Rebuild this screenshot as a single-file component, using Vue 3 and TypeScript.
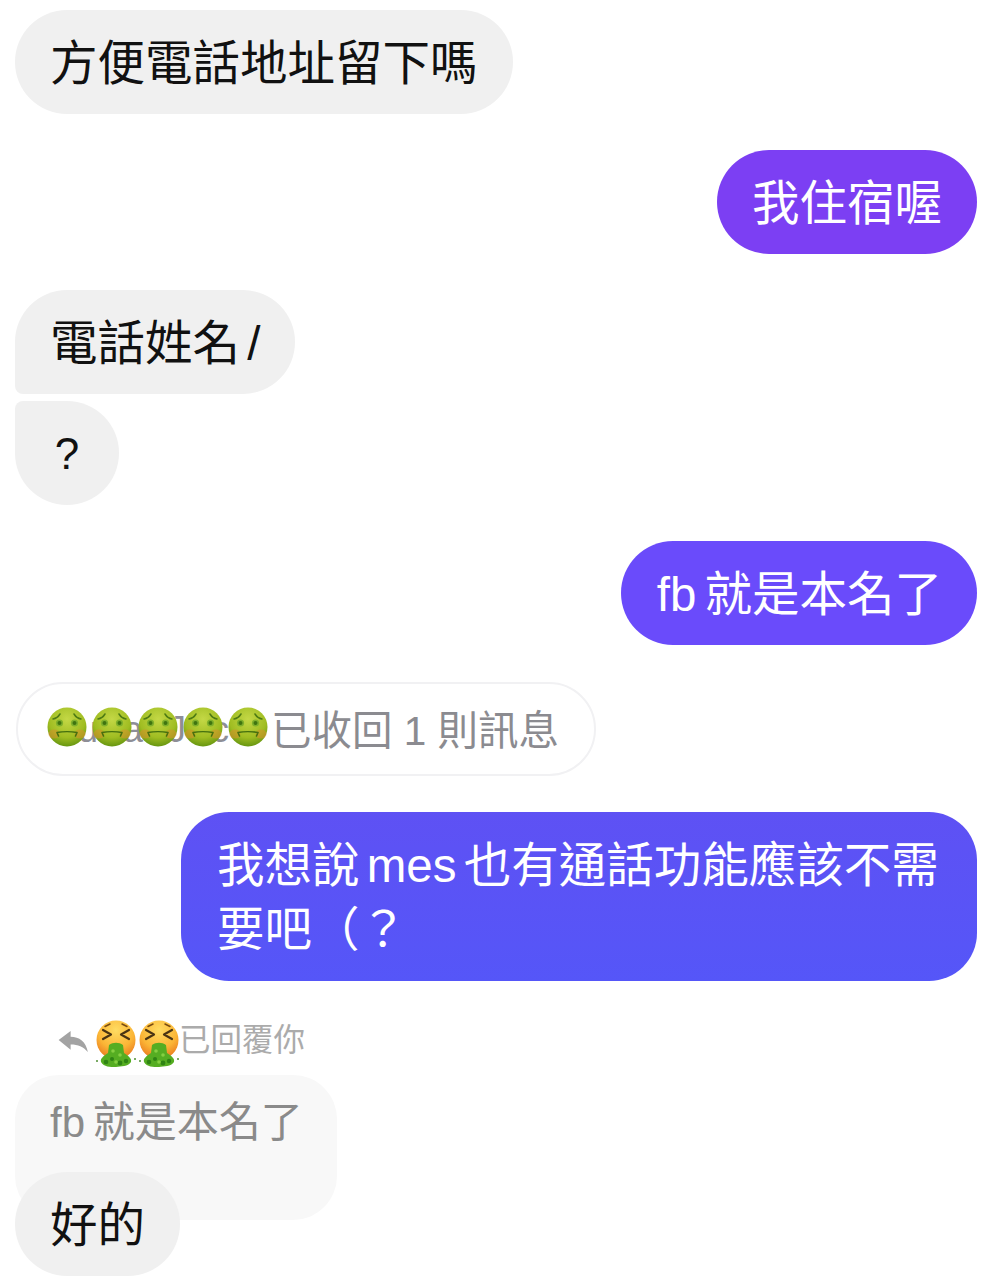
<script setup lang="ts">
const sick: number[] = [0, 1, 2, 3, 4]
const vomit: number[] = [0, 1]
</script>

<template>
  <main class="chat">
    <div class="row group"><div class="bubble in">方便電話地址留下嗎</div></div>
    <div class="row end group"><div class="bubble out violet">我住宿喔</div></div>

    <div class="row tight"><div class="bubble in first">電話姓名 /</div></div>
    <div class="row group"><div class="bubble in last">?</div></div>

    <div class="row end group-wide"><div class="bubble out indigo">fb 就是本名了</div></div>

    <div class="row group">
      <div class="notice">
        <span class="censored">
          <span class="hidden-name">uaJc</span>
          <span class="sick-row">
            <svg v-for="i in sick" :key="i" class="emoji" viewBox="0 0 40 40" aria-hidden="true">
              <defs>
                <radialGradient :id="'face' + i" cx="50%" cy="30%" r="72%">
                  <stop offset="0" stop-color="#c4d846" />
                  <stop offset="0.65" stop-color="#a0bd22" />
                  <stop offset="1" stop-color="#62930f" />
                </radialGradient>
              </defs>
              <circle cx="20" cy="20" r="19.5" :fill="'url(#face' + i + ')'" />
              <ellipse cx="7" cy="27" rx="5.500" ry="4.500" fill="#d2922a" opacity="0.6" />
              <ellipse cx="33" cy="27" rx="5.500" ry="4.500" fill="#d2922a" opacity="0.6" />
              <path d="M6 12 C9 11.500 11.500 9.500 13 7 M34 12 C31 11.500 28.500 9.500 27 7" fill="none" stroke="#4d7a14" stroke-width="1.500" stroke-linecap="round" />
              <circle cx="12.500" cy="16" r="3.600" fill="#7fb02c" />
              <circle cx="27.500" cy="16" r="3.600" fill="#7fb02c" />
              <circle cx="12.500" cy="16" r="2" fill="#3f7410" />
              <circle cx="27.500" cy="16" r="2" fill="#3f7410" />
              <path d="M10 25.500 C15 24.500 25 24.500 30 25.500 M10 25.500 L11.500 29 M30 25.500 L28.500 29" fill="none" stroke="#45700f" stroke-width="1.600" stroke-linecap="round" />
            </svg>
          </span>
        </span>
        <span class="notice-text">已收回 1 則訊息</span>
      </div>
    </div>

    <div class="row end group">
      <div class="bubble out blue">我想說 mes 也有通話功能應該不需要吧（？</div>
    </div>

    <div class="reply-label">
      <svg class="reply-arrow" viewBox="0 0 32 24" aria-hidden="true">
        <path d="M0.500 10.500 L13 1 L13 7 C22 7 29 12 31 23 C26 17 21 15 13 15 L13 20.500 Z" fill="#a3a3a3" />
      </svg>
      <svg v-for="i in vomit" :key="i" class="emoji-v" viewBox="0 0 42 48" aria-hidden="true">
        <defs>
          <radialGradient :id="'orange' + i" cx="50%" cy="25%" r="75%">
            <stop offset="0" stop-color="#ffdc62" />
            <stop offset="0.62" stop-color="#fbb536" />
            <stop offset="1" stop-color="#ea7a1e" />
          </radialGradient>
        </defs>
        <circle cx="21" cy="20" r="19.500" :fill="'url(#orange' + i + ')'" />
        <path d="M8 10 L16 14.500 L8 19 M34 10 L26 14.500 L34 19" fill="none" stroke="#4a3413" stroke-width="2.200" stroke-linecap="round" stroke-linejoin="round" />
        <path d="M10 6.500 L15 4 M32 6.500 L27 4" fill="none" stroke="#7a4d13" stroke-width="1.500" stroke-linecap="round" />
        <path d="M14 25 C18 22 24 22 28 25 L29 33 C33 36 37 38 36 42 C33 47 26 46 21 47 C15 47 9 47 6 42 C5 38 9 36 13 33 Z" fill="#55ad22" />
        <circle cx="11" cy="42" r="2.300" fill="#2f8414" />
        <circle cx="17" cy="39" r="2" fill="#2f8414" />
        <circle cx="25" cy="43" r="2.400" fill="#2f8414" />
        <circle cx="31" cy="41" r="2.200" fill="#2f8414" />
        <circle cx="18" cy="31" r="1.800" fill="#85cf42" />
        <circle cx="25" cy="35" r="1.800" fill="#85cf42" />
        <circle cx="21" cy="42" r="1.800" fill="#85cf42" />
        <circle cx="2" cy="41" r="1" fill="#4f8f33" />
        <circle cx="40" cy="39" r="1" fill="#4f8f33" />
      </svg>
      <span class="reply-text">已回覆你</span>
    </div>

    <div class="quote">fb 就是本名了</div>
    <div class="row overlap"><div class="bubble in">好的</div></div>
  </main>
</template>

<style>
html, body { margin: 0; background: #fff; }
</style>

<style scoped>
.chat {
  width: 986px;
  height: 1280px;
  box-sizing: border-box;
  padding: 10px 9px 0 15px;
  display: flex;
  flex-direction: column;
  overflow: hidden;
  font-family: "Liberation Sans", "Noto Sans CJK TC", sans-serif;
}
.row { display: flex; }
.end { justify-content: flex-end; }
.group { margin-bottom: 36px; }
.group-wide { margin-bottom: 37px; }
.tight { margin-bottom: 7px; }
.bubble {
  box-sizing: border-box;
  padding: 22px 35px 18px;
  font-size: 47.5px;
  line-height: 64px;
  word-spacing: -6px;
  border-radius: 52px;
  color: #111;
  white-space: nowrap;
}
.in { background: #f0f0f0; }
.first { border-bottom-left-radius: 8px; }
.last {
  border-top-left-radius: 8px;
  width: 104px;
  text-align: center;
  padding: 21px 0 19px;
  font-size: 44px;
}
.out { color: #fff; }
.violet { background: #7c3ff3; }
.indigo { background: #6a4bfb; padding-left: 36px; word-spacing: -5px; }
.blue {
  background: linear-gradient(180deg, #5e51f4, #5556f8);
  width: 796px;
  white-space: normal;
  border-radius: 48px;
  padding: 22px 36px 19px;
}
.notice {
  box-sizing: border-box;
  width: 580px;
  height: 94px;
  margin-left: 1px;
  border: 2px solid #f1f1f3;
  border-radius: 47px;
  padding-left: 29px;
  display: flex;
  align-items: center;
  gap: 3px;
  font-size: 40.5px;
  color: #8b8b90;
}
.censored {
  position: relative;
  width: 221px;
  height: 40px;
  flex: none;
  margin-bottom: 4px;
}
.hidden-name {
  position: absolute;
  left: 31px;
  top: 2px;
  font-size: 36px;
  letter-spacing: 25px;
  color: #8e8e96;
}
.sick-row {
  position: absolute;
  inset: 0;
  display: flex;
  justify-content: space-between;
}
.emoji { width: 40px; height: 40px; }
.notice-text { white-space: nowrap; margin-bottom: 4px; }
.reply-label {
  display: flex;
  align-items: center;
  gap: 1px;
  height: 48px;
  margin: 3px 0 7px 43px;
}
.reply-arrow { width: 31px; height: 23px; margin: 0 5px 6px 0; flex: none; }
.emoji-v { width: 42px; height: 48px; flex: none; }
.reply-text {
  font-size: 31.5px;
  color: #ababab;
  white-space: nowrap;
  margin: 0 0 14px -2px;
}
.quote {
  box-sizing: border-box;
  width: 322px;
  height: 145px;
  padding: 16px 35px 0;
  background: #f8f8f8;
  border-radius: 44px;
  font-size: 42px;
  line-height: 64px;
  word-spacing: -4px;
  color: #8a8a8a;
  white-space: nowrap;
}
.overlap { margin-top: -48px; position: relative; }
</style>
